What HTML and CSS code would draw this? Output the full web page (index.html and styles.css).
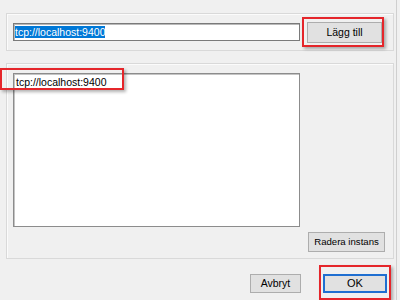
FILE: index.html
```html
<!DOCTYPE html>
<html lang="sv">
<head>
    <meta charset="UTF-8">
    <title>Instanser</title>
    <link rel="stylesheet" href="styles.css">
</head>
<body>
    <div class="dialog">

        <!-- adress + lägg till -->
        <div class="group group_top">
            <div class="textbox"><span class="selected">tcp://localhost:9400</span></div>
            <div class="btn btn_add">Lägg till</div>
            <div class="mark mark_add"></div>
        </div>

        <!-- lista med instanser -->
        <div class="group group_list">
            <div class="listbox">
                <div class="list_item">tcp://localhost:9400</div>
            </div>
            <div class="list_actions">
                <div class="btn btn_remove">Radera instans</div>
            </div>
            <div class="mark mark_item"></div>
        </div>

        <!-- knappar -->
        <div class="footer">
            <div class="btn btn_cancel">Avbryt</div>
            <div class="btn btn_ok">OK</div>
            <div class="mark mark_ok"></div>
        </div>
    </div>
</body>
</html>
```

FILE: styles.css
```css
html, body{
    margin: 0;
    height: 100%;
    background-color: #f0f0f0;
}
body{
    font-family: "Liberation Sans", Arial, sans-serif;
    font-size: 10px;
    color: #000;
}
.dialog{
    width: 397px;
    height: 300px;
    box-sizing: border-box;
    padding-top: 13px;
    border-right: 1px solid #cfcfcf;
    position: relative;
}

.group{
    margin-left: 6px;
    width: 388px;
    box-sizing: border-box;
    border: 1px solid #d9d9d9;
    box-shadow: inset 1px 1px 0 #fbfbfb;
    position: relative;
}
.group_top{
    height: 38px;
    display: flex;
    align-items: center;
    padding-left: 6px;
}
.textbox{
    width: 287px;
    height: 18px;
    box-sizing: border-box;
    background-color: #fff;
    border: 1px solid #7a7a7a;
    box-shadow: inset 1px 1px 0 #b9b9b9;
    font-size: 10.5px;
    line-height: 16px;
    padding-left: 1px;
    overflow: hidden;
    white-space: nowrap;
}
.selected{
    background-color: #0078d7;
    color: #fff;
}

.btn{
    box-sizing: border-box;
    background-color: #e1e1e1;
    border: 1px solid #adadad;
    text-align: center;
    font-size: 10.5px;
    white-space: nowrap;
}
.btn_add{
    margin-left: 7px;
    width: 75px;
    height: 21px;
    line-height: 19px;
}

.group_list{
    margin-top: 12px;
    height: 196px;
    padding: 9px 8px 0 6px;
    display: flex;
    flex-direction: column;
}
.listbox{
    width: 287px;
    height: 154px;
    box-sizing: border-box;
    background-color: #fff;
    border: 1px solid #8c8c8c;
    box-shadow: inset 1px 1px 0 #c4c4c4;
    padding: 2px 0 0 2px;
}
.list_item{
    font-size: 10.5px;
    line-height: 13px;
}
.list_actions{
    display: flex;
    justify-content: flex-end;
    margin-top: 5px;
}
.btn_remove{
    width: 77px;
    height: 20px;
    line-height: 18px;
    font-size: 9.6px;
}

.footer{
    display: flex;
    justify-content: flex-end;
    gap: 22px;
    margin-top: 15px;
    padding-right: 9px;
    position: relative;
}
.btn_cancel{
    width: 51px;
    height: 19px;
    line-height: 17px;
}
.btn_ok{
    width: 64px;
    height: 19px;
    line-height: 15px;
    border: 2px solid #1f6fd1;
    font-size: 11px;
}

/* röda markeringar ovanpå */
.mark{
    position: absolute;
    border: 2px solid #e5262b;
    box-shadow: 2px 2px 3px rgba(0, 0, 0, 0.3);
    pointer-events: none;
}
.mark_add{
    left: 295px;
    top: 3px;
    width: 78px;
    height: 26px;
}
.mark_item{
    left: -7px;
    top: 4px;
    width: 120px;
    height: 18px;
}
.mark_ok{
    right: 5px;
    top: -9px;
    width: 68px;
    height: 31px;
}
```
